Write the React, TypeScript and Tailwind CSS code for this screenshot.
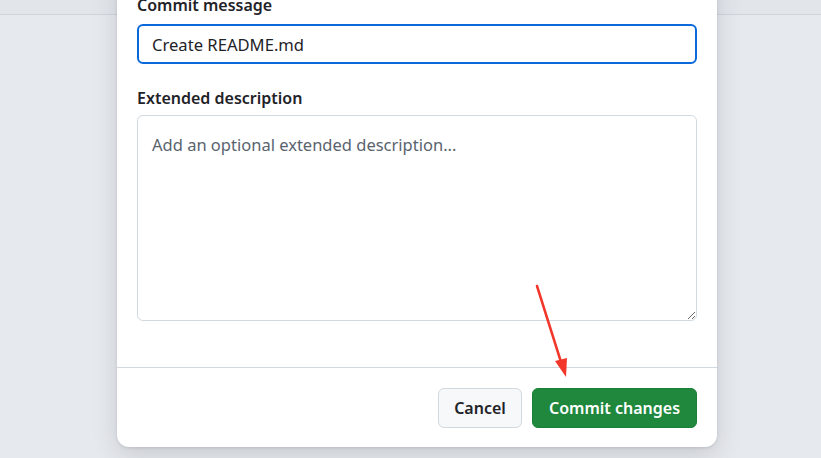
import React from "react";

const FONT = "font-['Noto_Sans','Liberation_Sans',sans-serif]";

const Arrow: React.FC = () => (
  <svg
    className="absolute left-0 top-0 pointer-events-none"
    width="821"
    height="458"
    viewBox="0 0 821 458"
  >
    <line x1="537" y1="286" x2="561" y2="362" stroke="#f2362a" strokeWidth="2.5" strokeLinecap="round" />
    <polygon points="566,377 555,361 567,358" fill="#f2362a" />
  </svg>
);

export default function App() {
  return (
    <div className={`relative w-full h-[458px] overflow-hidden bg-[#e6e9ed] ${FONT}`}>
      <div className="h-[15px] bg-[#e2e6eb] border-b border-[#cfd5dc]" />

      <div className="absolute left-[117px] top-[-27px] w-[600px] bg-white rounded-xl shadow-[0_8px_24px_rgba(66,74,83,0.18),0_1px_3px_rgba(31,35,40,0.12)]">
        <div className="flex flex-col px-5 pt-5 pb-[46px]">
          <label className="text-base leading-6 font-semibold text-[#1f2328] mb-[7px]">
            Commit message
          </label>
          <input
            readOnly
            value="Create README.md"
            className="h-10 border-2 border-[#0969da] rounded-md px-[13px] text-[16.6px] text-[#1f2328] outline-none bg-white"
          />
          <label className="mt-[22px] mb-[5px] text-base leading-6 font-semibold text-[#1f2328]">
            Extended description
          </label>
          <textarea
            placeholder="Add an optional extended description..."
            className="h-[206px] border border-[#d1d9e0] rounded-md px-[14px] pt-[17px] text-[16.5px] leading-6 text-[#1f2328] placeholder:text-[#59636e] outline-none resize-y"
          />
        </div>
        <div className="flex justify-end gap-[10px] border-t border-[#d1d9e0] px-5 pt-5 pb-[19px]">
          <button className="h-10 w-[84px] rounded-md border border-[#d1d9e0] bg-[#f6f8fa] text-base font-semibold text-[#1f2328]">
            Cancel
          </button>
          <button className="h-10 w-[165px] rounded-md border border-[#1a7f37] bg-[#1f883d] text-base font-semibold text-white">
            Commit changes
          </button>
        </div>
      </div>

      <Arrow />
    </div>
  );
}
